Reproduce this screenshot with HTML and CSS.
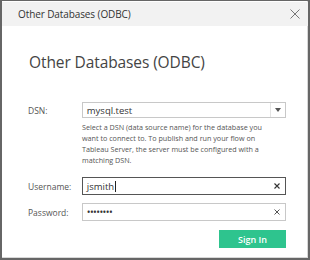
FILE: index.html
```html
<!DOCTYPE html>
<html>
<head>
<meta charset="utf-8">
<link rel="stylesheet" href="styles.css">
</head>
<body>
<div class="dialog">
  <div class="titlebar">
    <span class="title">Other Databases (ODBC)</span>
    <svg class="close" width="10" height="10" viewBox="0 0 10 10"><path d="M0.5 0.5L9.5 9.5M9.5 0.5L0.5 9.5" stroke="#777" stroke-width="1" fill="none"/></svg>
  </div>
  <div class="body">
    <h1 class="heading">Other Databases (ODBC)</h1>
    <div class="row dsn-row">
      <label class="label">DSN:</label>
      <div class="field select">
        <span class="value">mysql.test</span>
        <span class="arrow"><svg width="6" height="4" viewBox="0 0 6 4"><path d="M0 0H6L3 4Z" fill="#555"/></svg></span>
      </div>
    </div>
    <p class="help">Select a DSN (data source name) for the database you want to connect to. To publish and run your flow on Tableau Server, the server must be configured with a matching DSN.</p>
    <div class="row user-row">
      <label class="label">Username:</label>
      <div class="field input focused">
        <span class="value">jsmith<span class="caret"></span></span>
        <svg class="clear" width="6" height="6" viewBox="0 0 6 6"><path d="M0.5 0.5L5.5 5.5M5.5 0.5L0.5 5.5" stroke="#333" stroke-width="1.1" fill="none"/></svg>
      </div>
    </div>
    <div class="row pass-row">
      <label class="label">Password:</label>
      <div class="field input">
        <span class="value dots">••••••••</span>
        <svg class="clear" width="6" height="6" viewBox="0 0 6 6"><path d="M0.5 0.5L5.5 5.5M5.5 0.5L0.5 5.5" stroke="#555" stroke-width="1" fill="none"/></svg>
      </div>
    </div>
    <div class="actions">
      <button class="signin">Sign In</button>
    </div>
  </div>
</div>
</body>
</html>
```

FILE: styles.css
```css
html, body {
  margin: 0;
  padding: 0;
  background: #ffffff;
}
body {
  font-family: "Open Sans", "Noto Sans", sans-serif;
  color: #333;
}
.dialog {
  box-sizing: border-box;
  width: 310px;
  height: 260px;
  border: 2px solid #666;
  border-top-width: 1px;
  box-shadow: inset -1px -1px 0 #d8d8d8;
  background: #fff;
  display: flex;
  flex-direction: column;
}
.titlebar {
  height: 24px;
  background: #f2f2f2;
  display: flex;
  align-items: center;
  justify-content: space-between;
  padding: 0 8px 0 16px;
  margin-top: 1px;
}
.title {
  font-size: 10px;
  color: #333;
  letter-spacing: -0.1px;
}
.close {
  display: block;
  margin-bottom: 1px;
}
.body {
  padding: 0 22px 0 26px;
}
.heading {
  margin: 25px 0 0 1px;
  font-size: 15.5px;
  font-weight: 400;
  color: #444;
  line-height: 22px;
  letter-spacing: -0.1px;
}
.row {
  display: flex;
  align-items: center;
}
.dsn-row {
  margin-top: 29px;
}
.label {
  width: 54px;
  font-size: 8.5px;
  color: #555;
}
.field {
  box-sizing: border-box;
  width: 205px;
  border: 1px solid #c8c8c8;
  background: #fff;
  display: flex;
  align-items: center;
  position: relative;
}
.select {
  height: 16px;
}
.value {
  font-size: 9.5px;
  color: #333;
  padding-left: 4px;
  flex: 1;
  display: flex;
  align-items: center;
}
.arrow {
  width: 14px;
  height: 14px;
  display: flex;
  align-items: center;
  justify-content: center;
  border-left: 1px solid #e4e4e4;
}
.arrow svg {
  display: block;
}
.help {
  margin: 4px 0 0 54px;
  width: 190px;
  font-size: 7.2px;
  line-height: 11px;
  color: #555;
}
.user-row {
  margin-top: 11px;
}
.input {
  height: 18px;
  padding-right: 5px;
}
.focused {
  border-color: #555;
}
.caret {
  display: inline-block;
  width: 1px;
  height: 11px;
  background: #222;
  margin-left: 0.5px;
}
.clear {
  display: block;
}
.pass-row {
  margin-top: 8px;
}
.dots {
  font-size: 10px;
  letter-spacing: -0.6px;
  color: #333;
}
.actions {
  display: flex;
  justify-content: flex-end;
  margin-top: 9px;
}
.signin {
  width: 67px;
  height: 18px;
  border: none;
  background: #2ec48e;
  color: #fff;
  font-family: "Open Sans", "Noto Sans", sans-serif;
  font-size: 9px;
  font-weight: 600;
  padding: 0;
}
```
